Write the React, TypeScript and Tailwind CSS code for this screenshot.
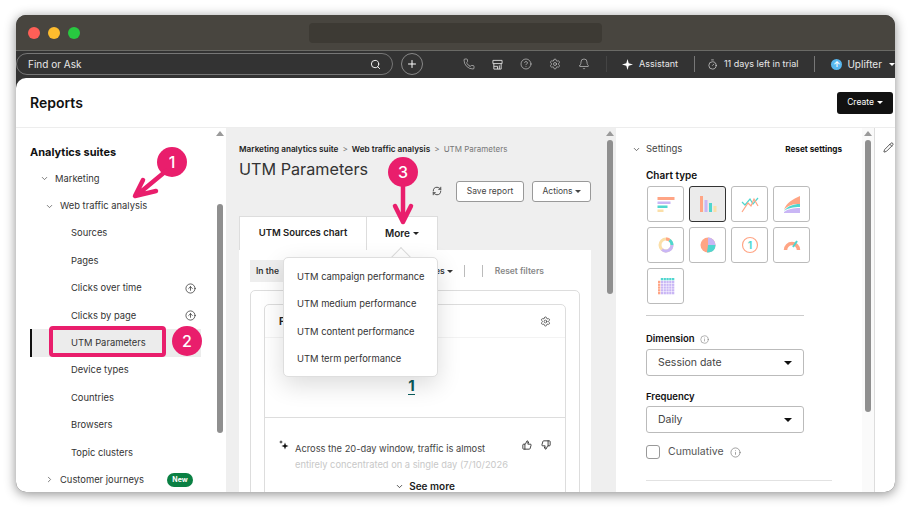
import {
  Bell,
  ChevronDown,
  ChevronRight,
  CircleArrowUp,
  CircleHelp,
  Info,
  Pencil,
  Phone,
  Plus,
  RefreshCw,
  Search,
  Settings,
  ThumbsDown,
  ThumbsUp,
  Timer,
} from "lucide-react"

const font = "font-['Inter','Noto_Sans',sans-serif]"

function Caret({ className = "" }: { className?: string }) {
  return <span className={`inline-block border-x-[3px] border-t-[3px] border-x-transparent border-t-current ${className}`} />
}

function ScrollTrack({ top, height, color = "bg-[#8f8f8f]" }: { top: string; height: string; color?: string }) {
  return (
    <div className="flex w-[12px] shrink-0 flex-col items-center">
      <div className="mt-[3px] h-0 w-0 border-x-[4px] border-b-[5px] border-x-transparent border-b-[#9a9a9a]" />
      <div className={`w-[6px] rounded-full ${color} ${top} ${height}`} />
    </div>
  )
}

function NavRow({ label, indent, icon, chevron, badge }: { label: string; indent: string; icon?: boolean; chevron?: "down" | "right"; badge?: boolean }) {
  return (
    <div className={`flex h-[27.4px] items-center text-[9.4px] text-[#333] ${indent}`}>
      {chevron === "down" && <ChevronDown className="mr-[6px] size-[9px] text-[#555]" />}
      {chevron === "right" && <ChevronRight className="mr-[6px] size-[9px] text-[#555]" />}
      <span>{label}</span>
      {icon && <CircleArrowUp className="ml-auto mr-[18px] size-[11px] text-[#222]" strokeWidth={1.5} />}
      {badge && <span className="ml-auto mr-[21px] flex h-[14px] w-[26px] items-center justify-center rounded-full bg-[#0a8043] text-[7px] font-bold text-white">New</span>}
    </div>
  )
}

function Sidebar() {
  return (
    <div className="flex w-[210px] shrink-0">
      <div className="w-[198px] shrink-0 pt-[16px]">
        <div className="ml-[14px] text-[11px] font-bold leading-[17px] text-[#111]">Analytics suites</div>
        <div className="mt-[4px]">
          <NavRow label="Marketing" indent="ml-[24px]" chevron="down" />
          <NavRow label="Web traffic analysis" indent="ml-[29px]" chevron="down" />
          <NavRow label="Sources" indent="ml-[55px]" />
          <NavRow label="Pages" indent="ml-[55px]" />
          <NavRow label="Clicks over time" indent="ml-[55px]" icon />
          <NavRow label="Clicks by page" indent="ml-[55px]" icon />
          <div className="ml-[14px] mr-[13px] flex h-[27.4px] items-center border-l-2 border-[#111] bg-[#ececec] pl-[39px] text-[9.4px] text-[#333]">UTM Parameters</div>
          <NavRow label="Device types" indent="ml-[55px]" />
          <NavRow label="Countries" indent="ml-[55px]" />
          <NavRow label="Browsers" indent="ml-[55px]" />
          <NavRow label="Topic clusters" indent="ml-[55px]" />
          <NavRow label="Customer journeys" indent="ml-[29px]" chevron="right" badge />
        </div>
      </div>
      <ScrollTrack top="mt-[68px]" height="h-[229px]" />
    </div>
  )
}

function Popup() {
  return (
    <div className="absolute left-[267px] top-[242px] z-10 w-[155px]">
      <div className="absolute left-[111px] top-[-7px] size-[14px] rotate-45 border-l border-t border-[#dcdcdc] bg-white" />
      <div className="relative flex h-[120px] flex-col justify-center rounded-[5px] border border-[#dedede] bg-white pl-[13px] pt-[2px] text-[9.4px] text-[#333] shadow-[0_8px_24px_rgba(0,0,0,0.14)]">
        <div className="flex h-[27.4px] items-center">UTM campaign performance</div>
        <div className="flex h-[27.4px] items-center">UTM medium performance</div>
        <div className="flex h-[27.4px] items-center">UTM content performance</div>
        <div className="flex h-[27.4px] items-center">UTM term performance</div>
      </div>
    </div>
  )
}

function MainColumn() {
  return (
    <div className="flex w-[390px] shrink-0 bg-[#efefef]">
      <div className="w-[378px] shrink-0 pl-[13px] pt-[15px]">
        <div className="flex items-center text-[8.2px] leading-[12px] text-[#777]">
          <span className="font-semibold text-[#222]">Marketing analytics suite</span>
          <span className="mx-[4px]">&gt;</span>
          <span className="font-semibold text-[#222]">Web traffic analysis</span>
          <span className="mx-[4px]">&gt;</span>
          <span className="text-[8px]">UTM Parameters</span>
        </div>
        <div className="mt-[2px] text-[16.2px] leading-[24px] text-[#333]">UTM Parameters</div>
        <div className="-mt-[1px] flex h-[22px] items-center justify-end">
          <RefreshCw className="mr-[14px] size-[10px] text-[#333]" />
          <button className="h-[21px] w-[68px] rounded-[3px] border border-[#999] bg-white text-[8.5px] text-[#444]">Save report</button>
          <button className="ml-[8px] mr-[13px] flex h-[21px] w-[59px] items-center justify-center gap-[2px] rounded-[3px] border border-[#999] bg-white text-[8.5px] text-[#444]">
            Actions <Caret />
          </button>
        </div>
        <div className="mt-[14px] flex h-[34px] text-[9.5px] font-semibold text-[#222]">
          <div className="flex w-[127px] items-center justify-center border-l border-t border-[#ddd] bg-white">UTM Sources chart</div>
          <div className="flex w-[72px] items-center justify-center gap-[3px] border border-b-0 border-[#ddd] bg-white text-[10px]">
            More <Caret />
          </div>
        </div>
        <div className="mr-[13px] h-[300px] bg-white px-[11px] pt-[10px]">
          <div className="flex h-[22px] items-center text-[8.5px] font-semibold text-[#333]">
            <div className="flex h-full w-[60px] items-center bg-[#eee] pl-[6px]">In the</div>
            <span className="ml-[125px]">es</span>
            <Caret className="ml-[2px]" />
            <span className="ml-[11px] h-[12px] w-px bg-[#bbb]" />
            <span className="ml-[17px] h-[12px] w-px bg-[#bbb]" />
            <span className="ml-[12px] text-[#888]">Reset filters</span>
          </div>
          <div className="mt-[8px] h-[220px] rounded-t-[5px] border border-[#ddd] px-[13px] pt-[13px]">
            <div className="h-[200px] rounded-t-[5px] border border-[#ddd]">
              <div className="flex h-[33px] items-center justify-between border-b border-[#f3f3f3] px-[14px] text-[10px] font-bold text-[#222]">
                <span>F</span>
                <Settings className="size-[11px] font-normal text-[#333]" strokeWidth={1.5} />
              </div>
              <div className="flex h-[80px] justify-center border-b border-[#ddd] pr-[7px] pt-[38px]">
                <span className="h-[19px] border-b border-[#0b5c5c] text-[15px] font-bold leading-[19px] text-[#0b5c5c]">1</span>
              </div>
              <div className="flex pl-[14px] pr-[14px] pt-[22px]">
                <svg className="mr-[6px] size-[10px] shrink-0 text-[#111]" viewBox="0 0 10 10" fill="currentColor">
                  <path d="M6 2.5l.9 2.6 2.6.9-2.6.9L6 9.5l-.9-2.6L2.5 6l2.6-.9z" />
                  <path d="M2 0l.5 1.5L4 2l-1.5.5L2 4l-.5-1.5L0 2l1.5-.5z" />
                </svg>
                <div className="w-[218px] text-[9.3px] leading-[16px] text-[#444]">
                  <div className="mt-[1px] whitespace-nowrap">Across the 20-day window, traffic is almost</div>
                  <div className="whitespace-nowrap text-[#c8c8c8]">entirely concentrated on a single day (7/10/2026</div>
                </div>
                <ThumbsUp className="ml-auto size-[10px] text-[#222]" />
                <ThumbsDown className="ml-[9px] size-[10px] text-[#222]" />
              </div>
              <div className="mt-[6px] flex items-center justify-center gap-[5px] pl-[20px] text-[10px] font-semibold leading-[14px] text-[#222]">
                <ChevronDown className="size-[9px]" />
                See more
              </div>
            </div>
          </div>
        </div>
      </div>
      <ScrollTrack top="mt-[4px]" height="h-[154px]" />
    </div>
  )
}

function Tile({ active, children }: { active?: boolean; children: React.ReactNode }) {
  return (
    <div className={`flex h-[36px] w-[37px] items-center justify-center rounded-[3px] border ${active ? "border-[#333] bg-[#ebebeb]" : "border-[#bbb] bg-white"}`}>
      <svg width="22" height="22" viewBox="0 0 22 22">{children}</svg>
    </div>
  )
}

const peach = "#ffa585"
const lilac = "#c9b6f5"
const teal = "#4fd6cf"
const cream = "#fbdfa8"

function ChartTiles() {
  const heat = []
  for (let r = 0; r < 6; r++) {
    for (let c = 0; c < 6; c++) {
      const fill = r === 0 ? (c === 0 ? "none" : teal) : c === 0 ? peach : lilac
      heat.push(<rect key={`${r}-${c}`} x={3 + c * 2.8} y={3 + r * 2.8} width="2.3" height="2.3" fill={fill} />)
    }
  }
  return (
    <div className="ml-[1px] mt-[4px] grid w-[163px] grid-cols-[37px_37px_37px_37px] gap-x-[5px] gap-y-[5px]">
      <Tile>
        <rect x="2.5" y="4" width="17" height="3" fill={peach} />
        <rect x="2.5" y="8.5" width="13" height="2.5" fill={lilac} />
        <rect x="2.5" y="12.5" width="10" height="2.5" fill={teal} />
        <rect x="2.5" y="16.5" width="6" height="2.5" fill={cream} />
      </Tile>
      <Tile active>
        <rect x="3" y="3" width="3" height="16" fill={peach} />
        <rect x="7.5" y="7" width="3" height="12" fill={lilac} />
        <rect x="12" y="10" width="3" height="9" fill={teal} />
        <rect x="16.5" y="13" width="3" height="6" fill={cream} />
      </Tile>
      <Tile>
        <path d="M3 9l3 3 5-6 3 5 5-6" fill="none" stroke={teal} strokeWidth="1.2" />
        <path d="M3 19l6-9 3 3 3-7 4 7" fill="none" stroke={peach} strokeWidth="1.2" />
      </Tile>
      <Tile>
        <path d="M3 17c2-7 9-11 16-14v8c-7 0-12 1-16 6z" fill={peach} />
        <path d="M3 18c4-5 9-7 16-7v3c-7 0-12 1-16 4z" fill={teal} />
        <path d="M3 19c4-3 9-4 16-4v5H3z" fill={lilac} />
      </Tile>
      <Tile>
        <circle cx="11" cy="11" r="6" fill="none" stroke={cream} strokeWidth="3" />
        <path d="M11 5a6 6 0 0 1 3.5 1.1" fill="none" stroke={peach} strokeWidth="3" />
        <path d="M14.5 6.1a6 6 0 0 1 2.5 4.9" fill="none" stroke={teal} strokeWidth="3" />
        <path d="M17 11a6 6 0 0 1-10 4.5" fill="none" stroke={lilac} strokeWidth="3" />
      </Tile>
      <Tile>
        <circle cx="11" cy="11" r="7.5" fill={peach} />
        <path d="M11 11V3.5a7.5 7.5 0 0 1 7.5 7.5z" fill={lilac} />
        <path d="M11 11l7.5 0a7.5 7.5 0 0 1-6 7.3l-2.5.2z" fill={teal} />
      </Tile>
      <Tile>
        <circle cx="11" cy="11" r="7.5" fill="none" stroke={peach} strokeWidth="1.2" />
        <text x="11" y="14.5" textAnchor="middle" fontSize="10" fontWeight="700" fill={teal} fontFamily="Inter, sans-serif">1</text>
      </Tile>
      <Tile>
        <path d="M4.5 16a6.5 6.5 0 0 1 13 0" fill="none" stroke={peach} strokeWidth="3.5" />
        <path d="M12 13l4-6" stroke={teal} strokeWidth="2" />
      </Tile>
      <Tile>{heat}</Tile>
    </div>
  )
}

function SelectBox({ label }: { label: string }) {
  return (
    <div className="flex h-[27px] w-[158px] items-center justify-between rounded-[3px] border border-[#bbb] bg-white pl-[11px] pr-[11px] text-[10.5px] text-[#444]">
      {label}
      <span className="h-0 w-0 border-x-[4px] border-t-[4px] border-x-transparent border-t-[#111]" />
    </div>
  )
}

function SettingsColumn() {
  return (
    <div className="flex flex-1">
      <div className="w-[246px] shrink-0 pl-[30px] pt-[13px]">
        <div className="-ml-[14px] flex h-[16px] items-center text-[9.5px] text-[#444]">
          <ChevronDown className="mr-[5px] size-[9px] text-[#444]" />
          Settings
          <span className="ml-auto mr-[20px] text-[8.2px] font-bold text-[#111]">Reset settings</span>
        </div>
        <div className="mt-[11px] text-[10px] font-semibold leading-[14px] text-[#111]">Chart type</div>
        <ChartTiles />
        <div className="mt-[11px] h-px w-[158px] bg-[#ccc]" />
        <div className="mt-[17px] flex h-[12px] items-center gap-[5px] text-[9.5px] font-semibold text-[#111]">
          Dimension <Info className="size-[9px] font-normal text-[#777]" strokeWidth={1.5} />
        </div>
        <div className="mt-[4px]"><SelectBox label="Session date" /></div>
        <div className="mt-[15px] h-[12px] text-[9.5px] font-semibold leading-[12px] text-[#111]">Frequency</div>
        <div className="mt-[3px]"><SelectBox label="Daily" /></div>
        <div className="mt-[12px] flex h-[14px] items-center text-[10.5px] text-[#555]">
          <span className="size-[14px] rounded-[3px] border border-[#999]" />
          <span className="ml-[8px]">Cumulative</span>
          <Info className="ml-[6px] size-[11px] text-[#777]" strokeWidth={1.5} />
        </div>
        <div className="mt-[21px] h-px w-[186px] bg-[#e2e2e2]" />
      </div>
      <div className="flex border-r border-[#ddd] bg-[#fafafa]">
        <ScrollTrack top="mt-[4px]" height="h-[272px]" />
      </div>
      <div className="flex-1 pl-[8px] pt-[14px]">
        <Pencil className="size-[11px] text-[#222]" strokeWidth={1.6} />
      </div>
    </div>
  )
}

function Annotations() {
  const dot = "absolute z-20 flex size-[30px] items-center justify-center rounded-full bg-[#e91e6c] text-[16px] font-medium text-white"
  return (
    <>
      <div className={`${dot} left-[141px] top-[132px]`}>1</div>
      <div className={`${dot} left-[156px] top-[311px]`}>2</div>
      <div className={`${dot} left-[372px] top-[142px]`}>3</div>
      <div className="absolute left-[33px] top-[311px] z-20 h-[31px] w-[117px] rounded-[4px] border-4 border-[#e91e6c]" />
      <svg className="absolute left-0 top-0 z-20" width="879" height="477" viewBox="0 0 879 477" fill="none">
        <path d="M150 156L121 180M127 165L119 181L140 176" stroke="#e91e6c" strokeWidth="4.5" strokeLinecap="round" strokeLinejoin="round" />
        <path d="M387 170V207M379 191L387 207L395 191" stroke="#e91e6c" strokeWidth="4.5" strokeLinecap="round" strokeLinejoin="round" />
      </svg>
    </>
  )
}

export default function App() {
  return (
    <div className={`h-[507px] w-[911px] bg-white pl-4 pt-[15px] ${font}`}>
      <div className="relative flex h-[477px] w-[879px] flex-col overflow-hidden rounded-[10px] bg-[#333] shadow-[0_2px_12px_rgba(0,0,0,0.45)]">
        <div className="flex h-[36px] shrink-0 items-center border-b border-[#6a6a66] bg-[#48453f] pl-[12px]">
          <span className="size-3 rounded-full bg-[#ff5f57]" />
          <span className="ml-2 size-3 rounded-full bg-[#febc2e]" />
          <span className="ml-2 size-3 rounded-full bg-[#28c840]" />
          <div className="ml-[229px] h-[20px] w-[293px] rounded-[4px] bg-[#3d3a34]" />
        </div>
        <div className="flex h-[27px] shrink-0 items-center whitespace-nowrap pb-[1px] text-[9.5px] text-[#e8e8e8]">
          <div className="flex h-[22px] w-[377px] shrink-0 items-center justify-between rounded-full border border-[#777] pl-[11px] pr-[11px] text-[10px]">
            Find or Ask
            <Search className="size-[11px] text-white" />
          </div>
          <div className="ml-[8px] flex size-[22px] shrink-0 items-center justify-center rounded-full border border-[#888]">
            <Plus className="size-[12px] text-white" />
          </div>
          <div className="ml-[40px] flex w-[127px] shrink-0 items-center justify-between text-[#ddd]">
            <Phone className="size-[12px]" strokeWidth={1.2} />
            <svg className="size-[11px]" viewBox="0 0 12 12" fill="none" stroke="currentColor" strokeWidth="1">
              <path d="M1 1.5h10V5H1zM2 5v6h8V5M2 8h4M6 8v3M8 7v4" />
            </svg>
            <CircleHelp className="size-[12px]" strokeWidth={1.2} />
            <Settings className="size-[12px]" strokeWidth={1.2} />
            <Bell className="size-[12px]" strokeWidth={1.2} />
          </div>
          <span className="ml-[16px] h-[16px] w-px bg-[#444]" />
          <svg className="ml-[15px] size-[11px] text-white" viewBox="0 0 12 12" fill="currentColor">
            <path d="M6 0l1.3 4.7L12 6 7.3 7.3 6 12 4.7 7.3 0 6l4.7-1.3z" />
          </svg>
          <span className="ml-[6px] text-[9px]">Assistant</span>
          <span className="ml-[16px] h-[16px] w-px bg-[#777]" />
          <Timer className="ml-[12px] size-[11px]" strokeWidth={1.4} />
          <span className="ml-[6px] text-[9px]">11 days left in trial</span>
          <span className="ml-[16px] h-[16px] w-px bg-[#777]" />
          <span className="ml-[16px] flex size-[11px] items-center justify-center rounded-full bg-[#58b7f0] text-[8px] font-bold leading-none text-white">↑</span>
          <span className="ml-[5px] text-[10px]">Uplifter</span>
          <Caret className="ml-[7px] text-white" />
        </div>
        <div className="relative flex min-h-0 flex-1 flex-col overflow-hidden rounded-tl-[10px] bg-white">
          <div className="flex h-[50px] shrink-0 items-center justify-between border-b border-[#ededed] pl-[14px] pr-[2px]">
            <span className="text-[14px] font-semibold text-[#111]">Reports</span>
            <button className="flex h-[22px] w-[56px] items-center justify-center gap-[3px] rounded-[3px] bg-[#111] text-[8.5px] text-white">
              Create <Caret />
            </button>
          </div>
          <div className="flex min-h-0 flex-1">
            <Sidebar />
            <MainColumn />
            <SettingsColumn />
          </div>
        </div>
        <Popup />
        <Annotations />
      </div>
    </div>
  )
}
